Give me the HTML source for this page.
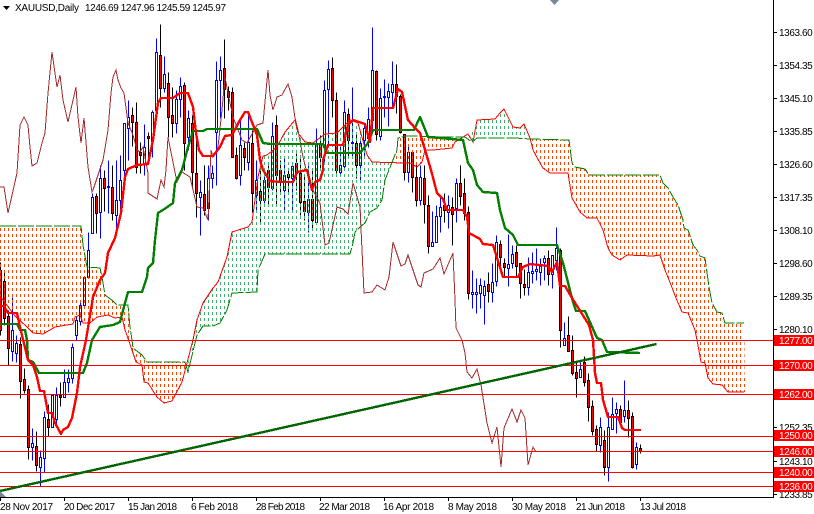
<!DOCTYPE html>
<html><head><meta charset="utf-8"><title>XAUUSD,Daily</title>
<style>
html,body{margin:0;padding:0;background:#fff;width:814px;height:514px;overflow:hidden}
svg{display:block}
text{font-family:"Liberation Sans",sans-serif;font-size:10px;fill:#000}
.p{letter-spacing:-.4px}
.w{letter-spacing:-.4px;fill:#fff}
</style></head><body>
<svg width="814" height="514" viewBox="0 0 814 514" xmlns="http://www.w3.org/2000/svg">
<defs>
<pattern id="o" width="4" height="6" patternUnits="userSpaceOnUse"><rect width="1" height="3" fill="#ff4500" shape-rendering="crispEdges"/></pattern>
<pattern id="g" width="4" height="6" patternUnits="userSpaceOnUse"><rect width="1" height="3" fill="#3cb371" shape-rendering="crispEdges"/></pattern>
</defs>
<rect width="814" height="514" fill="#fff"/>

<g transform="translate(.5 .5)" shape-rendering="crispEdges" fill="none" stroke-width="1">
<path stroke="#00f" d="M12 297V361M16 335V362M32 428V460M40 450V486M44 411V472M52 395V427M56 387V423M64 369V397M68 369V392M72 343V383M76 316V340M80 302V325M84 277V308M88 232V277M92 193V233M100 165V238M108 160V213M116 160V230M120 155V213M124 123V187M128 100V160M144 124V175M152 110V157M156 38V115M164 56V92M176 90V133M180 77V117M188 110V150M200 180V235M208 165V220M212 165V188M216 61V185M220 56V118M240 120V185M248 115V170M256 160V210M264 170V203M272 122V190M284 158V212M292 165V210M308 165V232M316 128V222M324 80V163M328 60V147M340 145V175M344 100V170M352 87V158M360 137V180M364 122V157M368 107V147M372 27V133M380 88V140M384 79V117M388 83V126M392 61V107M408 145V182M420 165V205M432 211V246M436 205V242M440 197V232M448 195V228M456 178V222M472 270V308M476 278V313M480 278V308M484 280V324M492 263V302M496 235V286M508 234V286M512 245V268M528 257V295M532 252V283M536 248V280M540 258V285M544 255V280M552 255V288M556 227V270M564 322V345M580 362V377M600 417V452M608 412V481M612 397V429M616 402V433M624 380V422M636 442V469"/>
<path stroke="#000" d="M0 262V335M4 272V325M8 310V365M20 337V398M24 368V393M28 385V459M36 431V471M48 404V436M60 382V406M96 193V233M104 170V211M112 165V220M132 107V146M136 102V173M140 142V173M148 132V163M160 24V107M168 72V137M172 87V137M184 82V170M192 115V188M196 140V217M204 165V215M224 39V118M228 86V110M232 87V157M236 147V179M244 142V170M252 130V212M260 170V224M268 165V205M276 115V205M280 160V192M288 170V192M296 153V190M300 155V215M304 175V220M312 170V228M320 135V170M332 57V117M336 92V173M348 108V157M356 132V178M376 70V140M396 64V113M400 94V133M404 134V180M412 152V192M416 163V206M424 165V223M428 195V253M444 193V222M452 197V245M460 165V205M464 178V220M468 206V299M488 272V302M500 240V270M504 258V277M516 245V277M520 263V298M524 269V295M548 250V285M560 248V347M568 316V351M572 335V375M576 362V397M584 356V386M588 373V421M592 400V435M596 425V451M604 430V475M620 405V422M628 400V437M632 412V468M640 444V453"/>
<path stroke="#00f" fill="#fff" d="M11 330h2V351h-2zM15 343h2V353h-2zM31 443h2V447h-2zM39 457h2V467h-2zM43 417h2V458h-2zM51 395h2V427h-2zM55 395h2V419h-2zM63 382h2V397h-2zM67 378h2V382h-2zM71 347h2V378h-2zM75 320h2V335h-2zM79 305h2V321h-2zM83 277h2V305h-2zM87 250h2V277h-2zM91 197h2V233h-2zM99 178h2V212h-2zM107 186h2V187h-2zM115 200h2V215h-2zM119 180h2V200h-2zM123 123h2V170h-2zM127 117h2V128h-2zM143 147h2V163h-2zM151 112h2V141h-2zM155 52h2V110h-2zM163 74h2V88h-2zM175 99h2V123h-2zM179 86h2V99h-2zM187 118h2V137h-2zM199 192h2V197h-2zM207 178h2V208h-2zM211 173h2V178h-2zM215 80h2V132h-2zM219 70h2V80h-2zM239 145h2V175h-2zM247 142h2V162h-2zM255 180h2V195h-2zM263 180h2V200h-2zM271 136h2V188h-2zM283 175h2V190h-2zM291 166h2V178h-2zM307 199h2V212h-2zM315 145h2V222h-2zM323 90h2V147h-2zM327 69h2V89h-2zM339 165h2V172h-2zM343 112h2V166h-2zM351 142h2V143h-2zM359 143h2V165h-2zM363 128h2V140h-2zM367 119h2V138h-2zM371 70h2V120h-2zM379 98h2V136h-2zM383 96h2V97h-2zM387 91h2V97h-2zM391 84h2V92h-2zM407 152h2V172h-2zM419 177h2V200h-2zM431 242h2V246h-2zM435 216h2V242h-2zM439 207h2V216h-2zM447 205h2V212h-2zM455 183h2V208h-2zM471 292h2V294h-2zM475 292h2V294h-2zM479 285h2V293h-2zM483 286h2V295h-2zM491 282h2V292h-2zM495 242h2V281h-2zM507 264h2V268h-2zM511 254h2V263h-2zM527 272h2V287h-2zM531 271h2V273h-2zM535 269h2V271h-2zM539 266h2V272h-2zM543 258h2V262h-2zM551 255h2V274h-2zM555 248h2V260h-2zM563 338h2V345h-2zM579 369h2V377h-2zM599 427h2V445h-2zM607 427h2V467h-2zM611 414h2V429h-2zM615 409h2V413h-2zM623 410h2V416h-2zM635 447h2V464h-2z"/>
<path stroke="#000" fill="#f00" d="M-1 270h2V330h-2zM3 281h2V318h-2zM7 316h2V348h-2zM19 344h2V381h-2zM23 379h2V390h-2zM27 389h2V447h-2zM35 446h2V465h-2zM47 419h2V427h-2zM59 395h2V397h-2zM95 196h2V213h-2zM103 178h2V188h-2zM111 187h2V213h-2zM131 115h2V122h-2zM135 122h2V167h-2zM139 152h2V155h-2zM147 136h2V138h-2zM159 55h2V88h-2zM167 83h2V117h-2zM171 115h2V123h-2zM183 85h2V143h-2zM191 123h2V172h-2zM195 173h2V193h-2zM203 194h2V210h-2zM223 68h2V89h-2zM227 91h2V97h-2zM231 92h2V157h-2zM235 155h2V178h-2zM243 148h2V157h-2zM251 143h2V193h-2zM259 191h2V200h-2zM267 170h2V187h-2zM275 125h2V175h-2zM279 170h2V180h-2zM287 174h2V177h-2zM295 163h2V173h-2zM299 173h2V202h-2zM303 201h2V211h-2zM311 199h2V220h-2zM319 145h2V157h-2zM331 68h2V100h-2zM335 100h2V170h-2zM347 114h2V140h-2zM355 143h2V165h-2zM375 71h2V134h-2zM395 84h2V96h-2zM399 96h2V132h-2zM403 134h2V172h-2zM411 152h2V177h-2zM415 177h2V200h-2zM423 178h2V204h-2zM427 205h2V246h-2zM443 205h2V210h-2zM451 207h2V214h-2zM459 183h2V196h-2zM463 193h2V213h-2zM467 212h2V293h-2zM487 284h2V291h-2zM499 244h2V257h-2zM503 263h2V267h-2zM515 252h2V266h-2zM519 263h2V283h-2zM523 284h2V287h-2zM547 258h2V274h-2zM559 250h2V330h-2zM567 335h2V351h-2zM571 350h2V373h-2zM575 372h2V378h-2zM583 362h2V382h-2zM587 380h2V407h-2zM591 406h2V431h-2zM595 429h2V444h-2zM603 440h2V467h-2zM619 409h2V422h-2zM627 410h2V418h-2zM631 416h2V467h-2zM639 448h2V451h-2z"/>
</g>

<g shape-rendering="crispEdges">
<polygon fill="url(#o)" points="0,226 81,226 83,245 87,267 100,268 102,277 105,295 113,301 117,305 128,305 130,327 132,340 133,348 142,355 147,362 185,362 187,367 182,382 172,401 164,403 157,397 148,383 144,382 142,365 136,362 132,350 125,330 122,317 115,318 108,315 97,317 90,323 83,323 80,315 75,317 73,324 55,327 43,334 33,333 27,327 15,316 0,296"/>
<polygon fill="url(#g)" points="187,367 193,340 197,320 203,303 213,288 218,282 227,257 232,232 248,227 252,222 258,177 263,156 267,155 277,147 285,132 295,120 298,133 305,142 313,143 325,134 337,133 350,120 358,123 367,155 372,162 380,162 392,162 385,180 382,200 377,208 370,212 365,223 360,227 355,232 353,243 350,254 265,254 258,270 257,292 232,293 227,310 220,323 213,326 203,326 197,335 188,372"/>
<polygon fill="url(#o)" points="392,162 397,150 398,138 407,136 448,137 455,136 465,137 468,134 463,137 455,142 452,148 433,150 425,150 422,162 417,167 410,163 403,163"/>
<polygon fill="url(#g)" points="470,136 477,120 495,119 500,113 504,109 508,117 513,127 520,128 524,124 530,138 515,138 477,138 472,142"/>
<polygon fill="url(#o)" points="530,139 569,140 572,163 575,167 585,169 589,175 660,175 663,183 668,188 673,197 678,205 683,220 684,228 688,230 693,245 697,250 700,256 705,258 709,287 712,303 717,312 722,313 725,323 744,323 745,392 728,392 722,385 713,384 708,378 705,363 701,362 697,340 695,330 688,313 682,312 676,298 673,290 665,270 660,255 653,256 627,255 620,260 612,255 608,248 603,230 597,218 587,218 580,212 572,198 568,173 550,173 543,168 540,163 533,150"/>
</g>

<g fill="none" stroke-width="1" shape-rendering="crispEdges">
<polyline stroke="#f00" points="0,296 15,316 27,327 33,333 43,334 55,327 73,324 75,317 80,315 83,323 90,323 97,317 108,315 115,318 122,317 125,330 132,350 136,362 142,365 144,382 148,383 157,397 164,403 172,401 182,382 187,363 193,340 197,320 203,303 213,288 218,282 227,257 232,232 248,227 252,222 258,177 263,156 267,155 277,147 285,132 295,120 298,133 305,142 313,143 325,134 337,133 350,120 358,123 367,155 372,162 403,163 410,163 417,167 422,162 425,150 433,150 452,148 455,142 463,137 468,134 473,142 477,120 495,119 500,113 504,109 508,117 513,127 520,128 524,124 530,138 533,150 540,163 543,168 550,173 568,173 572,198 580,212 587,218 597,218 603,230 608,248 612,255 620,260 627,255 653,256 660,255 665,270 673,290 676,298 682,312 688,313 695,330 697,340 701,362 705,363 708,378 713,384 722,385 728,392 744,392"/>
<polyline stroke="#008000" stroke-dasharray="16 2" points="0,226 81,226 83,245 87,267 100,268 102,277 105,295 113,301 117,305 128,305 130,327 132,340 133,348 142,355 147,362 185,362 188,372 195,343 197,335 203,326 213,326 220,323 227,310 232,293 257,292 258,270 265,254 350,254 353,243 355,232 360,227 365,223 370,212 377,208 382,200 385,180 397,150 398,138 407,136 448,137 465,137 472,142 477,138 515,138 530,139 569,140 572,163 575,167 585,169 589,175 660,175 663,183 668,188 673,197 678,205 683,220 684,228 688,230 693,245 697,250 700,256 705,258 709,287 712,303 717,312 722,313 725,323 744,323"/>
<polyline stroke="#a52a2a" points="0,187 4,187 8,213 17,173 20,125 24,117 28,125 30,147 32,166 37,163 42,143 45,133 48,93 52,52 57,87 60,75 63,100 68,122 76,87 78,117 81,143 84,118 88,167 92,192 93,190 103,160 108,130 111,93 113,77 116,70 118,80 121,88 124,93 128,123 133,135 137,150 140,152 143,147 148,173 148,193 157,199 161,180 164,187 166,170 168,137 172,157 177,182 182,172 190,177 197,207 203,208 208,220 211,150 213,157 218,147 222,110 225,77 228,93 233,117 242,140 247,143 257,125 263,123 268,70 270,95 273,110 277,97 282,95 288,84 292,97 295,118 298,130 303,157 310,185 320,203 325,245 329,243 337,207 343,209 348,214 353,183 360,207 364,293 372,292 377,285 385,290 389,277 393,242 401,266 405,264 408,255 418,285 421,287 424,273 433,269 440,258 444,274 453,253 455,300 456,328 462,340 465,353 467,372 472,378 477,369 481,385 487,423 492,443 497,427 501,467 504,428 512,409 517,422 521,410 525,418 528,465 533,447 536,452"/>
</g>

<g fill="none" stroke-width="2.4" stroke-linejoin="round" shape-rendering="crispEdges">
<polyline stroke="#008000" points="0,324 17,324 20,330 25,330 27,340 28,360 33,362 39,373 83,373 87,363 92,340 100,327 113,325 120,322 125,303 128,292 142,292 147,277 148,268 153,263 155,240 158,213 163,210 173,203 175,183 182,170 188,147 193,131 203,131 207,129 257,129 263,143 270,144 323,144 327,153 360,153 368,143 373,130 414,130 420,117 428,137 463,140 468,163 473,170 477,185 483,192 497,193 500,210 505,228 513,235 518,245 557,245 563,263 573,302 576,311 585,311 597,338 602,340 607,352 640,353"/>
<polyline stroke="#f00" points="0,306 4,306 8,313 17,313 20,327 28,360 33,365 37,377 40,391 44,391 48,413 52,413 55,423 61,434 63,430 68,427 72,418 77,393 80,367 86,340 93,297 100,280 105,273 108,253 115,238 121,213 125,177 128,169 137,165 148,164 153,140 158,103 161,98 173,98 180,93 188,93 193,107 196,133 199,150 203,156 213,156 220,147 225,136 232,135 240,120 245,112 248,112 257,135 260,160 263,170 270,181 280,182 293,182 297,172 307,170 312,190 315,182 320,180 323,170 323,160 328,145 343,145 348,125 353,120 365,124 370,142 373,108 393,108 398,89 402,92 408,120 415,128 420,133 431,170 437,193 443,199 447,210 463,210 467,217 469,233 480,239 483,244 493,245 503,277 518,277 523,267 530,264 548,266 552,272 557,262 560,286 565,286 572,298 589,325 593,340 595,373 597,383 601,383 603,400 608,417 618,417 622,428 625,430 641,430"/>
</g>

<g stroke="#f00" stroke-width="1" shape-rendering="crispEdges">
<path d="M0 340.5H773M0 365.5H773M0 394.5H773M0 436.5H773M0 451.5H773M0 472.5H773M0 486.5H773"/>
</g>
<line x1="0" y1="491" x2="656.5" y2="344" stroke="#006400" stroke-width="2.4" shape-rendering="crispEdges"/>

<polygon points="550,0 559,0 554.5,5" fill="#778899"/>
<polygon points="0,491 0,497 6,497" fill="#778899"/>

<g stroke="#000" stroke-width="1" shape-rendering="crispEdges">
<path d="M773.5 0V498M0 497.5H773"/>
<path d="M0.5 498V501M64.5 498V501M128.5 498V501M192.5 498V501M256.5 498V501M320.5 498V501M384.5 498V501M448.5 498V501M512.5 498V501M576.5 498V501M640.5 498V501"/>
<path d="M774 32.5H777M774 65.5H777M774 98.5H777M774 131.5H777M774 164.5H777M774 197.5H777M774 230.5H777M774 263.5H777M774 296.5H777M774 329.5H777M774 427.5H777M774 461.5H777M774 494.5H777"/>
</g>

<polygon points="3,6 10,6 6.5,10" fill="#000"/>
<text x="15" y="11" textLength="64" lengthAdjust="spacing">XAUUSD,Daily</text>
<text x="85" y="11" textLength="141" lengthAdjust="spacing">1246.69 1247.96 1245.59 1245.97</text>

<g class="prices">
<text class="p" x="779" y="36">1363.60</text>
<text class="p" x="779" y="69">1354.35</text>
<text class="p" x="779" y="102">1345.10</text>
<text class="p" x="779" y="135">1335.85</text>
<text class="p" x="779" y="168">1326.60</text>
<text class="p" x="779" y="201">1317.35</text>
<text class="p" x="779" y="234">1308.10</text>
<text class="p" x="779" y="267">1298.60</text>
<text class="p" x="779" y="300">1289.35</text>
<text class="p" x="779" y="333">1280.10</text>
<text class="p" x="779" y="431">1252.35</text>
<text class="p" x="779" y="465">1243.10</text>
<text class="p" x="779" y="498">1233.85</text>
</g>

<g fill="#f00" shape-rendering="crispEdges">
<rect x="774" y="335" width="40" height="11"/>
<rect x="774" y="360" width="40" height="11"/>
<rect x="774" y="389" width="40" height="11"/>
<rect x="774" y="430" width="40" height="11"/>
<rect x="774" y="446" width="40" height="11"/>
<rect x="774" y="467" width="40" height="11"/>
<rect x="774" y="481" width="40" height="11"/>
</g>
<text class="w" x="779" y="344">1277.00</text>
<text class="w" x="779" y="369">1270.00</text>
<text class="w" x="779" y="398">1262.00</text>
<text class="w" x="779" y="439">1250.00</text>
<text class="w" x="779" y="455">1246.00</text>
<text class="w" x="779" y="476">1240.00</text>
<text class="w" x="779" y="490">1236.00</text>

<text x="0" y="510" textLength="53" lengthAdjust="spacing">28 Nov 2017</text>
<text x="64" y="510" textLength="51" lengthAdjust="spacing">20 Dec 2017</text>
<text x="128" y="510" textLength="49" lengthAdjust="spacing">15 Jan 2018</text>
<text x="191" y="510" textLength="47" lengthAdjust="spacing">6 Feb 2018</text>
<text x="256" y="510" textLength="49" lengthAdjust="spacing">28 Feb 2018</text>
<text x="319" y="510" textLength="51" lengthAdjust="spacing">22 Mar 2018</text>
<text x="383" y="510" textLength="51" lengthAdjust="spacing">16 Apr 2018</text>
<text x="448" y="510" textLength="49" lengthAdjust="spacing">8 May 2018</text>
<text x="512" y="510" textLength="54" lengthAdjust="spacing">30 May 2018</text>
<text x="576" y="510" textLength="49" lengthAdjust="spacing">21 Jun 2018</text>
<text x="640" y="510" textLength="46" lengthAdjust="spacing">13 Jul 2018</text>
</svg>
</body></html>
